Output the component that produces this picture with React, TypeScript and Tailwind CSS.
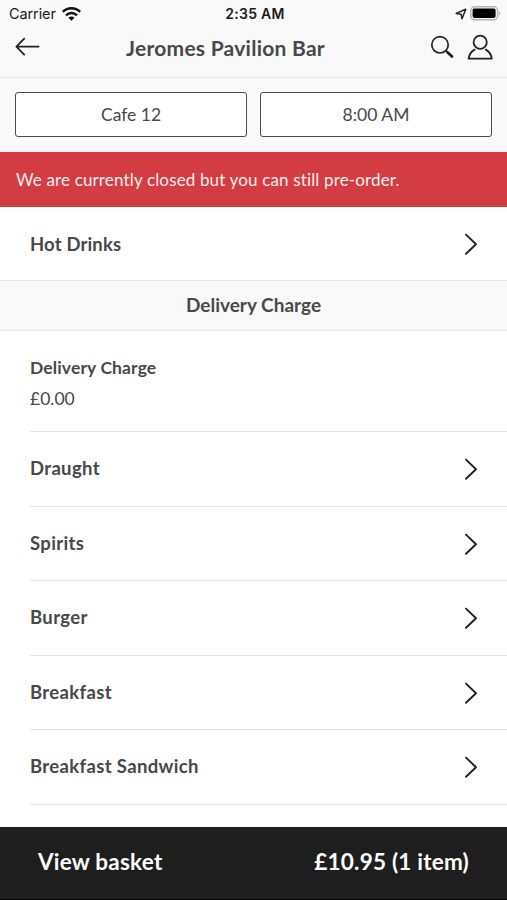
import React from 'react';

const categories = ['Draught', 'Spirits', 'Burger', 'Breakfast', 'Breakfast Sandwich'];

const WifiIcon = () => (
    <svg width="19" height="14" viewBox="0 0 19 14" fill="none" stroke="#111" strokeWidth="2.4">
        <path d="M.8 4.9c4.8-4.8 12.6-4.8 17.4 0" />
        <path d="M4 8.3c3-3 8-3 11 0" />
        <path d="M9.5 13.8 6.4 10.7c1.7-1.6 4.5-1.6 6.2 0z" fill="#111" stroke="none" />
    </svg>
);

const LocationIcon = () => (
    <svg width="12" height="12" viewBox="0 0 12 12" fill="none" stroke="#222" strokeWidth="1.5" strokeLinejoin="round">
        <path d="M10.8 1.2 1.2 5.4l4.9.8.9 4.6z" />
    </svg>
);

const BatteryIcon = () => (
    <svg width="31" height="15" viewBox="0 0 31 15" fill="none">
        <rect x="0.8" y="0.8" width="26.8" height="13" rx="3.8" stroke="#b3b3b3" strokeWidth="1.4" />
        <rect x="2.6" y="2.6" width="23" height="9.4" rx="2" fill="#000" />
        <path d="M28.8 5.2c1.8.8 1.8 3.6 0 4.4z" fill="#b3b3b3" />
    </svg>
);

const BackIcon = () => (
    <svg width="26" height="20" viewBox="0 0 26 20" fill="none" stroke="#222" strokeWidth="1.8" strokeLinecap="round" strokeLinejoin="round">
        <path d="M24.6 9.6H2.4M10.2 1.6 2.4 9.6l7.8 8" />
    </svg>
);

const SearchIcon = () => (
    <svg width="24" height="24" viewBox="0 0 24 24" fill="none" stroke="#222" strokeLinecap="round">
        <circle cx="10" cy="9.8" r="8.2" strokeWidth="1.7" />
        <path d="m15.9 15.7 1.5 1.5" strokeWidth="1.7" />
        <path d="m17.4 17.2 4.6 4.4" strokeWidth="2.7" />
    </svg>
);

const UserIcon = () => (
    <svg width="26" height="26" viewBox="0 0 26 26" fill="none" stroke="#222" strokeWidth="1.8" strokeLinecap="round" strokeLinejoin="round">
        <circle cx="13.2" cy="8.3" r="6.6" />
        <path d="M7.6 15.6C4.2 17.6 2.1 20.8 1.6 24.6h23.2c-.5-3.8-2.6-7-6-9" />
    </svg>
);

const ChevronIcon = () => (
    <svg width="14" height="22" viewBox="0 0 14 22" fill="none" stroke="#222" strokeWidth="1.9" strokeLinecap="round" strokeLinejoin="round">
        <path d="m2 1.6 10 9.6-10 9.6" />
    </svg>
);

const StatusBar = () => (
    <div className="grid h-[27px] grid-cols-3 items-center pl-[9px] pr-[6px] font-['Inter',sans-serif] text-[#1c1c1c]">
        <div className="flex items-center gap-1.5">
            <span className="text-[14.5px] tracking-[-0.1px]">Carrier</span>
            <WifiIcon />
        </div>
        <span className="text-center text-[14px] font-semibold tracking-[0.3px]">2:35 AM</span>
        <div className="flex items-center justify-end gap-[3px]">
            <LocationIcon />
            <BatteryIcon />
        </div>
    </div>
);

const CategoryRow = ({ name }: { name: string }) => (
    <div className="flex h-[74.5px] items-center justify-between border-b border-[#e6e6e6] pr-[29px] pt-px">
        <span className="text-[18.5px] font-bold tracking-[0.35px]">{name}</span>
        <ChevronIcon />
    </div>
);

const App = () => {
    return (
        <div className="flex h-[900px] w-[507px] flex-col overflow-hidden bg-white font-['Lato',sans-serif] text-[#484848]">
            <header className="h-[78px] shrink-0 border-b border-[#e6e6e6] bg-[#f9f9f9]">
                <StatusBar />
                <div className="flex h-[39px] items-center px-[14px]">
                    <div className="flex w-[26px] shrink-0">
                        <BackIcon />
                    </div>
                    <h1 className="flex-1 pt-0.5 text-center text-[21px] font-bold tracking-[0.25px]">Jeromes Pavilion Bar</h1>
                    <div className="flex w-[82px] shrink-0 items-center justify-end gap-[13px]">
                        <SearchIcon />
                        <UserIcon />
                    </div>
                </div>
            </header>

            <div className="flex h-[74px] shrink-0 gap-[13px] bg-[#f9f9f9] px-[15px] pt-[14px]">
                <button className="h-[45px] flex-1 rounded-[3px] border border-[#4a4a4a] bg-white pt-0.5 text-[17.5px]">Cafe 12</button>
                <button className="h-[45px] flex-1 rounded-[3px] border border-[#4a4a4a] bg-white pt-0.5 text-[17.5px]">8:00 AM</button>
            </div>

            <div className="flex h-[55px] shrink-0 items-center bg-[#d43c44] px-4 text-[17px] tracking-[0.15px] text-[#fdeeee]">
                <span>We are currently closed but you can still pre-order.</span>
            </div>

            <main className="min-h-0 flex-1 overflow-hidden">
                <div className="flex h-[73px] items-center justify-between pl-[30px] pr-[29px] pt-px">
                    <span className="pt-px text-[18.5px] font-bold tracking-[0.15px]">Hot Drinks</span>
                    <ChevronIcon />
                </div>
                <h2 className="flex h-[51px] items-center justify-center border-y border-[#e6e6e6] bg-[#f9f9f9] text-[19px] font-bold">
                    Delivery Charge
                </h2>
                <div className="pl-[30px]">
                    <div className="flex h-[101px] flex-col justify-center gap-1 border-b border-[#e6e6e6] pt-[5px]">
                        <span className="text-[17.5px] font-bold tracking-[0.13px]">Delivery Charge</span>
                        <span className="text-[17.5px]">£0.00</span>
                    </div>
                    {categories.map((name) => (
                        <CategoryRow key={name} name={name} />
                    ))}
                </div>
            </main>

            <footer className="flex h-[73px] shrink-0 items-center justify-between border-b border-black bg-[#1e1e1e] px-[38px] pb-[3px] text-[22.5px] font-bold tracking-[0.22px] text-white">
                <span>View basket</span>
                <span>£10.95 (1 item)</span>
            </footer>
        </div>
    );
};

export default App;
